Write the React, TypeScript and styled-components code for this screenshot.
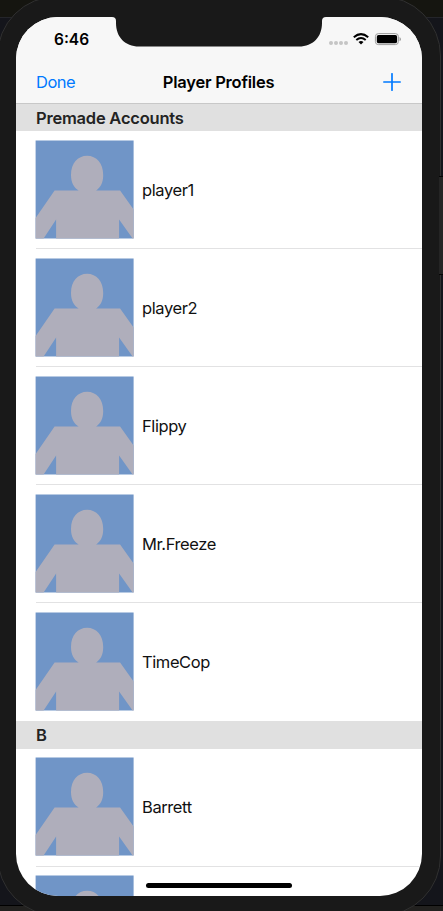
import React from "react";
import styled, { createGlobalStyle } from "styled-components";

const GlobalStyle = createGlobalStyle`
  * { box-sizing: border-box; }
  html, body { margin: 0; padding: 0; }
  body { overflow: hidden; background: #15161a; }
`;

const Desktop = styled.div`
  position: relative;
  width: 443px;
  height: 911px;
  overflow: hidden;
  background: linear-gradient(#151510 0 17px, #24252a 17px 18px, #14151b 18px 905px, #000 905px 906px, #22211f 906px);
  font-family: Inter, "Liberation Sans", sans-serif;
  -webkit-font-smoothing: antialiased;
`;

const SideButton = styled.div`
  position: absolute;
  left: 439px;
  top: 176px;
  width: 4px;
  height: 99px;
  background: #252525;
  border: solid #050505;
  border-width: 1px 0;
`;

const Phone = styled.div`
  width: 444px;
  height: 920px;
  margin: -4px 0 0 -3px;
  padding: 20px 18px 19px;
  border: 1px solid #303030;
  border-radius: 60px;
  background: #191919;
`;

const Screen = styled.div`
  position: relative;
  width: 406px;
  height: 879px;
  overflow: hidden;
  border-radius: 42px;
  background: #fff;
`;

const Header = styled.header`
  height: 87px;
  background: #f7f7f7;
  border-bottom: 1px solid #c8c8c8;
`;

const StatusBar = styled.div`
  display: flex;
  justify-content: space-between;
  height: 43px;
  padding: 13px 21px 0 38px;
`;

const Clock = styled.span`
  font-size: 15.5px;
  line-height: 20px;
  font-weight: 600;
  letter-spacing: 0;
`;

const NavBar = styled.nav`
  display: grid;
  grid-template-columns: 1fr auto 1fr;
  align-items: center;
  height: 43px;
  padding: 1px 21px 0 20px;
`;

const DoneButton = styled.button`
  justify-self: start;
  padding: 0;
  border: 0;
  background: none;
  color: #007aff;
  font: 400 16.5px/22px Inter, sans-serif;
  letter-spacing: -0.5px;
`;

const Title = styled.h1`
  margin: 0;
  font-size: 16.5px;
  line-height: 22px;
  font-weight: 600;
  letter-spacing: -0.22px;
`;

const AddButton = styled.button`
  justify-self: end;
  display: flex;
  padding: 0;
  border: 0;
  background: none;
`;

const SectionHeader = styled.h2`
  height: 27.4px;
  margin: 0;
  padding-left: 20px;
  background: #e0e0e0;
  color: #232323;
  font-size: 16.5px;
  line-height: 28px;
  font-weight: 600;
  letter-spacing: -0.22px;
`;

const List = styled.ul`
  margin: 0;
  padding: 0;
  list-style: none;
`;

const Row = styled.li`
  display: flex;
  align-items: center;
  gap: 8px;
  height: 118px;
  margin-left: 20px;
  border-bottom: 1px solid #e2e2e3;

  &:last-child { border-bottom-color: transparent; }
`;

const Name = styled.span`
  color: #111;
  font-size: 16.5px;
  line-height: 22px;
  letter-spacing: -0.4px;
`;

const Portrait = styled.svg`
  display: block;
  flex: none;
  width: 98px;
  height: 98px;
  overflow: visible;
`;

const Notch = styled.svg`
  position: absolute;
  left: 96px;
  top: 0;
`;

const HomeIndicator = styled.div`
  position: absolute;
  left: 130px;
  top: 866px;
  width: 146px;
  height: 5px;
  border-radius: 3px;
  background: #000;
`;

const Avatar = () => (
  <Portrait viewBox="0 0 98 98">
    <g transform="translate(-.4 -.5)">
      <rect width="98" height="98" fill="#7095c7" />
      <path
        d="M51.5 15.3C42 15.3 35.4 23 35.4 34.5C35.4 42 38.3 47.2 43 50H19L0 77.5V98H8L20.5 79V98H83.5V79L97 98H98V69L84.5 50H60.5C65 47 67.6 42 67.6 34.5C67.6 23 61 15.3 51.5 15.3Z"
        fill="#afaebb"
      />
    </g>
  </Portrait>
);

const StatusIcons = () => (
  <svg width="74" height="20" viewBox="0 0 74 20">
    <g fill="#c5c5c5">
      <circle cx="4" cy="13" r="2" />
      <circle cx="9" cy="13" r="2" />
      <circle cx="14" cy="13" r="2" />
      <circle cx="19" cy="13" r="2" />
    </g>
    <g fill="none" stroke="#000" strokeWidth="2">
      <path d="M26.8 7.2Q34 1 41.2 7.2" />
      <path d="M29.3 10Q34 6 38.7 10" />
    </g>
    <path d="M31.5 12Q34 9.9 36.5 12L34 14.5Z" />
    <rect x="48.4" y="3.6" width="23" height="11" rx="3" fill="none" stroke="#9c9c9c" />
    <rect x="49.8" y="5" width="20.3" height="8.3" rx="1.7" />
    <path d="M72.5 7V11.3Q74 10.5 74 9.2T72.5 7Z" fill="#a1a1a1" />
  </svg>
);

const sections = [
  { title: "Premade Accounts", players: ["player1", "player2", "Flippy", "Mr.Freeze", "TimeCop"] },
  { title: "B", players: ["Barrett", ""] },
];

export default function App() {
  return (
    <Desktop>
      <GlobalStyle />
      <SideButton />
      <Phone>
        <Screen>
          <Header>
            <StatusBar>
              <Clock>6:46</Clock>
              <StatusIcons />
            </StatusBar>
            <NavBar>
              <DoneButton>Done</DoneButton>
              <Title>Player Profiles</Title>
              <AddButton aria-label="Add">
                <svg width="18" height="18" viewBox="0 0 18 18">
                  <path d="M9 .8V17.2M.8 9H17.2" stroke="#007aff" strokeWidth="1.7" strokeLinecap="round" />
                </svg>
              </AddButton>
            </NavBar>
          </Header>
          {sections.map((section) => (
            <section key={section.title}>
              <SectionHeader>{section.title}</SectionHeader>
              <List>
                {section.players.map((player, index) => (
                  <Row key={index}>
                    <Avatar />
                    <Name>{player}</Name>
                  </Row>
                ))}
              </List>
            </section>
          ))}
          <Notch width="214" height="30" viewBox="0 0 214 30">
            <path
              d="M0 0H214Q210 .2 210 4V6C210 20 201 29.5 187 29.5H27C13 29.5 4 20 4 6V4Q4 .2 0 0Z"
              fill="#191919"
            />
          </Notch>
          <HomeIndicator />
        </Screen>
      </Phone>
    </Desktop>
  );
}
